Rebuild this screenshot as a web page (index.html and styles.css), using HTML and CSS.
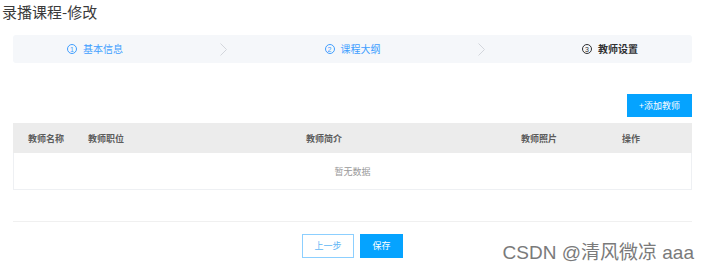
FILE: index.html
```html
<!DOCTYPE html>
<html lang="zh-CN">
<head>
<meta charset="utf-8">
<title>录播课程-修改</title>
<link rel="stylesheet" href="styles.css">
</head>
<body>
<div class="page">
  <h1 class="title">录播课程-修改</h1>
  <div class="content">
    <div class="steps">
      <div class="step done">
        <span class="step-title"><span class="step-icon">1</span>基本信息</span>
        <span class="step-arrow"><svg width="7" height="13" viewBox="0 0 7 13"><polyline points="0.5,0.5 6.5,6.5 0.5,12.5" fill="none" stroke="#d3d6dc" stroke-width="1"/></svg></span>
      </div>
      <div class="step done">
        <span class="step-title"><span class="step-icon">2</span>课程大纲</span>
        <span class="step-arrow"><svg width="7" height="13" viewBox="0 0 7 13"><polyline points="0.5,0.5 6.5,6.5 0.5,12.5" fill="none" stroke="#d3d6dc" stroke-width="1"/></svg></span>
      </div>
      <div class="step current">
        <span class="step-title"><span class="step-icon">3</span>教师设置</span>
      </div>
    </div>

    <div class="toolbar">
      <button class="btn btn-primary btn-add">+添加教师</button>
    </div>

    <div class="table">
      <div class="thead">
        <div class="th">教师名称</div>
        <div class="th">教师职位</div>
        <div class="th">教师简介</div>
        <div class="th">教师照片</div>
        <div class="th">操作</div>
      </div>
      <div class="empty">暂无数据</div>
    </div>

    <div class="footer">
      <button class="btn btn-plain">上一步</button>
      <button class="btn btn-primary btn-save">保存</button>
    </div>
  </div>
  <div class="watermark">CSDN @清风微凉 aaa</div>
</div>
</body>
</html>
```
FILE: styles.css
```css
* { box-sizing: border-box; }
html, body { margin: 0; padding: 0; background: #fff; }
body {
  font-family: "Noto Sans CJK SC", "Noto Sans", "Liberation Sans", sans-serif;
  color: #303133;
  width: 709px;
  height: 273px;
  overflow: hidden;
}
.page { position: relative; height: 273px; }
.title {
  margin: 0;
  padding: 2px 0 0 2px;
  font-size: 15px;
  line-height: 20px;
  font-weight: normal;
  color: #3a3a3a;
}
.content {
  margin: 13px 17px 0 13px;
}
.steps {
  display: flex;
  align-items: center;
  height: 28px;
  padding: 0 54px;
  background: #f5f7fa;
  border-radius: 3px;
}
.step {
  display: flex;
  align-items: center;
  font-size: 10px;
  line-height: 14px;
}
.step.done { flex: 1 1 0; color: #409eff; }
.step.current { flex: none; color: #303133; font-weight: bold; }
.step-title { display: flex; align-items: center; white-space: nowrap; }
.step-icon {
  display: inline-flex;
  align-items: center;
  justify-content: center;
  width: 10px;
  height: 10px;
  margin-right: 6px;
  border: 1px solid currentColor;
  border-radius: 50%;
  font-family: "Liberation Sans", sans-serif;
  font-size: 7px;
  line-height: 1;
  font-weight: normal;
}
.step-arrow {
  flex: 1;
  display: flex;
  justify-content: center;
  align-items: center;
}
.step-arrow svg { display: block; }

.toolbar {
  display: flex;
  justify-content: flex-end;
  margin-top: 31px;
}
.btn {
  font-family: inherit;
  font-size: 9px;
  line-height: 12px;
  border-radius: 0;
  cursor: pointer;
  padding: 0;
}
.btn-primary {
  background: #05a3ff;
  border: 1px solid #05a3ff;
  color: #fff;
}
.btn-add { width: 65px; height: 23px; }

.table {
  margin-top: 6px;
  border-left: 1px solid #eef0f3;
  border-right: 1px solid #eef0f3;
  border-bottom: 1px solid #eef0f3;
}
.thead {
  display: grid;
  grid-template-columns: 60px 218px 215px 101px 83px;
  height: 30px;
  align-items: center;
  background: #ececec;
  margin: 0 -1px;
}
.th {
  padding-left: 15px;
  font-size: 9px;
  font-weight: bold;
  color: #5c5c5c;
  white-space: nowrap;
}
.empty {
  height: 36px;
  display: flex;
  align-items: center;
  justify-content: center;
  font-size: 9px;
  color: #999;
}

.footer {
  margin-top: 31px;
  border-top: 1px solid #f0f0f0;
  padding-top: 12px;
  display: flex;
  justify-content: center;
  gap: 6px;
}
.btn-plain {
  width: 52px;
  height: 24px;
  background: #fff;
  border: 1px solid #8ccfff;
  color: #5fb6f5;
}
.btn-save { width: 43px; height: 24px; }

.watermark {
  position: absolute;
  right: 15px;
  top: 242px;
  font-family: "Liberation Sans", "Noto Sans CJK SC", sans-serif;
  font-size: 19px;
  line-height: 22px;
  color: #7a7a7a;
  text-shadow: 0 0 1px #fff;
  white-space: nowrap;
}
```
